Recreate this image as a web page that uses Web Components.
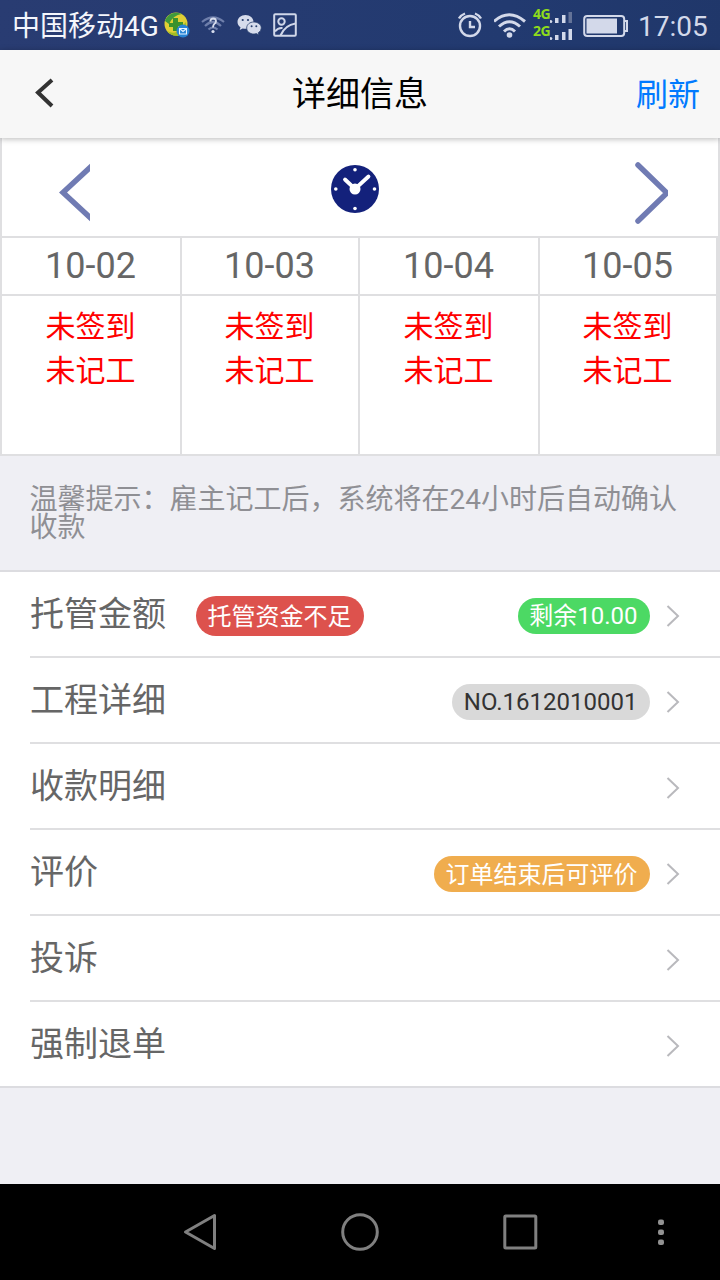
<!DOCTYPE html>
<html lang="zh-CN">
<head>
<meta charset="utf-8">
<title>详细信息</title>
<style>
html, body { margin: 0; }
body { font-family: Roboto, "Noto Sans CJK SC", sans-serif; background: #efeff4; overflow: hidden; }
</style>
</head>
<body>
<app-screen></app-screen>
<script>
const define = (name, html) => {
  const tpl = document.createElement('template');
  tpl.innerHTML = html;
  customElements.define(name, class extends HTMLElement {
    constructor() {
      super();
      this.attachShadow({ mode: 'open' }).append(tpl.content.cloneNode(true));
    }
  });
};

define('status-bar', `
<style>
:host { display: flex; align-items: center; height: 50px; box-sizing: border-box; padding: 0 12px; color: #d3d9ea;
  background: linear-gradient(100deg, #293c72, #223a70 70%, #20376a); font-size: 28px; white-space: nowrap; }
svg { display: block; flex: none; }
.carrier { color: #f4f6fc; line-height: 54px; height: 50px; width: 147px; }
.app { margin-left: 5px; } .q { margin-left: 11px; } .wx { margin-left: 12px; } .pic { margin-left: 11px; }
.gap { flex: 1; }
.wifi { margin-left: 10px; }
.net { display: grid; grid-template-rows: 17px 17px; margin-left: 7px; width: 42px; height: 36px; }
.net div { display: flex; }
.net b { font: 700 14px/14px "Open Sans", sans-serif; color: #8fdb1c; width: 17px; letter-spacing: -.6px; }
.bat { margin-left: 8px; }
.time { margin-left: 9px; line-height: 54px; height: 50px; width: 70px; }
</style>
<span class="carrier">中国移动4G</span>
<svg class="app" width="26" height="26" viewBox="0 0 26 26"><circle cx="12" cy="12" r="11.500" fill="#e0cf35"/><path d="M1 9A12 12 0 0 1 18 2Q9 3 5 12Z" fill="#3f9a3c"/><path d="M3 19Q12 24 17 15L22 10Q24 20 14 24Q7 24 3 19Z" fill="#a2bd25"/><path d="M9 6h5v4h5v4h-5v5H9v-4H5v-4h4z" fill="#3b922c"/><circle cx="19" cy="19" r="6.500" fill="#2784d6"/><path d="M15.500 16.500h7v5.500h-7zl3.500 3 3.500-3" fill="none" stroke="#e8f4ff" stroke-width="1.100"/></svg>
<svg class="q" width="24" height="22" viewBox="0 0 24 22"><g fill="none" stroke="#6f7fab" stroke-width="2.200"><path d="M1 8Q12-1 23 8M4 12Q12 4 20 12M7.500 15.500Q12 11 16.500 15.500"/></g><path d="M9.300 7.500Q9.500 4.500 12.300 4.500Q15 4.700 15 7.300Q15 9 13.300 10Q12 11 12 13.500" fill="none" stroke="#d8deee" stroke-width="1.800"/><circle cx="12" cy="17.500" r="1.600" fill="#d8deee"/></svg>
<svg class="wx" width="25" height="22" viewBox="0 0 25 22"><path d="M8.500 1C4 1 .5 4 .5 8c0 2.200 1.100 4 3 5.300L2.700 16l3-1.600q1.400.4 2.800.4C13 14.800 16.500 12 16.500 8S13 1 8.500 1z" fill="#d6dcec"/><path d="M16.800 8C12.800 8 9.700 10.500 9.700 14s3.200 6 7.100 6q1.400 0 2.600-.4l2.600 1.400-.7-2.300Q24.300 17 24.300 14c0-3.500-3.400-6-7.500-6z" fill="#d6dcec" stroke="#28406f" stroke-width=".8"/><g fill="#28406f"><circle cx="5.700" cy="6" r="1.100"/><circle cx="11" cy="6" r="1.100"/><circle cx="14.600" cy="12.300" r="1"/><circle cx="19.300" cy="12.300" r="1"/></g></svg>
<svg class="pic" width="24" height="24" viewBox="0 0 24 24" fill="none" stroke="#d0d7e9" stroke-width="2"><rect x="1.200" y="1.200" width="21.600" height="21.600" rx="1"/><circle cx="8.500" cy="8.500" r="3.200"/><path d="M7.500 22.500Q12 12 22.500 10.500M2 18.500Q5 14.500 9.500 15"/></svg>
<span class="gap"></span>
<svg width="26" height="26" viewBox="0 0 26 26" fill="none" stroke="#d3d9ea" stroke-width="2.400"><circle cx="12" cy="14" r="10"/><path d="M12 9v6h5M1 6.500Q3 3 7 1.500M23 6.500Q21 3 17 1.500"/></svg>
<svg class="wifi" width="32" height="26" viewBox="0 0 32 26" fill="none" stroke="#d3d9ea" stroke-width="3"><path d="M0 9.500Q15-4 31 9.500M5 14.500Q15.500 5 26 14.500M10 19.500Q15.500 14 21 19.500"/><circle cx="15.500" cy="23" r="2.800" fill="#d3d9ea" stroke="none"/></svg>
<div class="net">
<div><b>4G</b><svg width="25" height="17" viewBox="0 0 25 17" fill="#d3d9ea"><circle cx="0.800" cy="14.500" r="1.500"/><path d="M5 11h3.500v5H5zM12 8h3.500v8H12z"/><path d="M18.500 5H22v11h-3.500z" fill="#647398"/></svg></div>
<div><b>2G</b><svg width="25" height="17" viewBox="0 0 25 17" fill="#d3d9ea"><circle cx="0.800" cy="14.500" r="1.500"/><path d="M5 11h3.500v5H5zM12 8h3.500v8H12zM18.500 5H22v11h-3.500z"/></svg></div>
</div>
<svg class="bat" width="46" height="24" viewBox="0 0 46 24"><rect x="1.200" y="3" width="40" height="20" rx="3" fill="none" stroke="#d3d9ea" stroke-width="2"/><path d="M3.500 5.500h30.500v15H3.500z" fill="#d3d9ea"/><path d="M42 8h2v10h-2" fill="none" stroke="#d3d9ea" stroke-width="2"/></svg>
<span class="time">17:05</span>`);

define('nav-header', `
<style>
:host { display: grid; grid-template-columns: 100px 1fr 100px; align-items: center; height: 88px; background: #f7f7f7;
  box-shadow: 0 1px 6px rgba(0,0,0,.28); position: relative; z-index: 1; line-height: 88px; }
svg { display: block; margin: -2px 0 0 34px; }
.title { text-align: center; font-size: 34px; color: #000; height: 88px; }
.action { text-align: right; font-size: 32px; color: #007aff; padding-right: 20px; height: 88px; line-height: 90px; }
</style>
<svg width="22" height="32" viewBox="0 0 22 32" fill="none" stroke="#333" stroke-width="4"><path d="M18 3L4 15.500 18 29"/></svg>
<div class="title"><slot></slot></div>
<div class="action"><slot name="action"></slot></div>`);

define('week-pager', `
<style>
:host { display: flex; justify-content: space-between; align-items: center; height: 98px; box-sizing: border-box; background: #fff;
  border: solid #dfdfe1; border-width: 0 2px; padding: 0 50px 0 57px; }
svg { display: block; }
.l { margin-top: 12px; } .r { margin-top: 12px; }
.c { margin-top: 4px; margin-right: 15px; }
</style>
<svg class="l" width="31" height="60" viewBox="0 0 31 60" fill="none" stroke="#707bb3" stroke-width="5.500"><path d="M36 0L4 29.500 36 59" /></svg>
<svg class="c" width="48" height="48" viewBox="0 0 48 48"><circle cx="24" cy="24" r="24" fill="#13217b"/><g fill="#fff"><circle cx="24" cy="4.800" r="1.800"/><circle cx="24" cy="43.500" r="1.800"/><circle cx="4.800" cy="24" r="1.800"/><circle cx="43.500" cy="24" r="1.800"/><circle cx="24" cy="24" r="5.500"/></g><path d="M14 14.500L24 24 37.500 11.500" fill="none" stroke="#fff" stroke-width="3.800" stroke-linecap="round"/></svg>
<svg class="r" width="33" height="62" viewBox="0 0 33 62" fill="none" stroke="#707bb3" stroke-width="5.500" stroke-linecap="round"><path d="M3 3L32 31 3 59"/></svg>`);

define('day-grid', `
<style>
:host { display: grid; grid-template-columns: 180px 178px 180px 178px; box-sizing: border-box; height: 220px; background: #fff;
  border-top: 2px solid #dfdfe1; border-bottom: 2px solid #dfdfe1; border-right: 4px solid #dfdfe1; }
</style>
<slot></slot>`);

define('day-cell', `
<style>
:host { display: block; border-left: 2px solid #dfdfe1; text-align: center; }
.date { height: 56px; line-height: 57px; font-size: 36px; color: #666; border-bottom: 2px solid #dfdfe1; text-indent: -1px; }
.state { font-size: 30px; line-height: 44px; color: #f00; padding: 9px 1px 0 0; }
</style>
<div class="date"><slot name="date"></slot></div>
<div class="state"><slot></slot></div>`);

define('hint-note', `
<style>
:host { display: block; height: 114px; box-sizing: border-box; padding: 30px 30px 0 29.500px; font-size: 28px; line-height: 28px; color: #8f8f94; }
</style>
<slot></slot>`);

define('list-group', `
<style>
:host { display: block; background: #fff; border-top: 2px solid #dcdce0; border-bottom: 2px solid #dcdce0; }
</style>
<slot></slot>`);

define('list-row', `
<style>
:host { display: flex; height: 84px; padding-right: 40px; margin-left: 30px; border-bottom: 2px solid #dfdfe1; }
:host(:last-child) { border-bottom: 0; }
.label { font-size: 34px; color: #666; line-height: 84px; margin-right: 30px; }
.end { margin-left: auto; padding-top: 26px; }
.start { padding-top: 24px; }
svg { display: block; margin: 33px 0 0 16px; }
</style>
<span class="label"><slot></slot></span>
<div class="start"><slot name="start"></slot></div>
<div class="end"><slot name="end"></slot></div>
<svg width="14" height="22" viewBox="0 0 14 22" fill="none" stroke="#b9b9bd" stroke-width="2"><path d="M1.500 1L12 11 1.500 21"/></svg>`);

define('pill-badge', `
<style>
:host { display: block; height: 36px; line-height: 37px; padding: 0 12.500px 0 11.500px; border-radius: 20px; font-size: 24px; color: #fff; white-space: nowrap; }
:host([kind=danger]) { background: #dd524d; height: 40px; line-height: 42px; }
:host([kind=success]) { background: #4cd964; }
:host([kind=warning]) { background: #f0ad4e; line-height: 38px; }
:host([kind=plain]) { background: #d9d9d9; color: #333; line-height: 36px; }
</style>
<slot></slot>`);

define('system-nav', `
<style>
:host { display: flex; height: 96px; background: #000; align-items: center; padding-left: 182px; }
svg { display: block; }
.home { margin-left: 122px; } .recent { margin-left: 122px; } .more { margin-left: 100px; }
</style>
<svg width="36" height="40" viewBox="0 0 36 40" fill="none" stroke="#808080" stroke-width="3" stroke-linejoin="round"><path d="M32.500 3.500v33L3.500 20z"/></svg>
<svg class="home" width="40" height="40" viewBox="0 0 40 40" fill="none" stroke="#808080" stroke-width="3"><circle cx="20" cy="20" r="17.300"/></svg>
<svg class="recent" width="36" height="40" viewBox="0 0 36 40" fill="none" stroke="#808080" stroke-width="3"><rect x="2.800" y="4" width="31" height="32" rx="1"/></svg>
<svg class="more" width="44" height="30" viewBox="0 0 44 30" fill="#929292"><rect x="20" y="2.500" width="6" height="5.500" rx="2"/><rect x="20" y="12.500" width="6" height="5.500" rx="2"/><rect x="20" y="22.500" width="6" height="5.500" rx="2"/></svg>`);

define('app-screen', `
<style>
:host { display: flex; flex-direction: column; width: 720px; height: 1280px; background: #efeff4; }
system-nav { margin-top: auto; }
</style>
<status-bar></status-bar>
<nav-header>详细信息<span slot="action">刷新</span></nav-header>
<week-pager></week-pager>
<day-grid>
<day-cell><span slot="date">10-02</span>未签到<br>未记工</day-cell>
<day-cell><span slot="date">10-03</span>未签到<br>未记工</day-cell>
<day-cell><span slot="date">10-04</span>未签到<br>未记工</day-cell>
<day-cell><span slot="date">10-05</span>未签到<br>未记工</day-cell>
</day-grid>
<hint-note>温馨提示：雇主记工后，系统将在24小时后自动确认收款</hint-note>
<list-group>
<list-row>托管金额<pill-badge slot="start" kind="danger">托管资金不足</pill-badge><pill-badge slot="end" kind="success">剩余10.00</pill-badge></list-row>
<list-row>工程详细<pill-badge slot="end" kind="plain">NO.1612010001</pill-badge></list-row>
<list-row>收款明细</list-row>
<list-row>评价<pill-badge slot="end" kind="warning">订单结束后可评价</pill-badge></list-row>
<list-row>投诉</list-row>
<list-row>强制退单</list-row>
</list-group>
<system-nav></system-nav>`);
</script>
</body>
</html>
